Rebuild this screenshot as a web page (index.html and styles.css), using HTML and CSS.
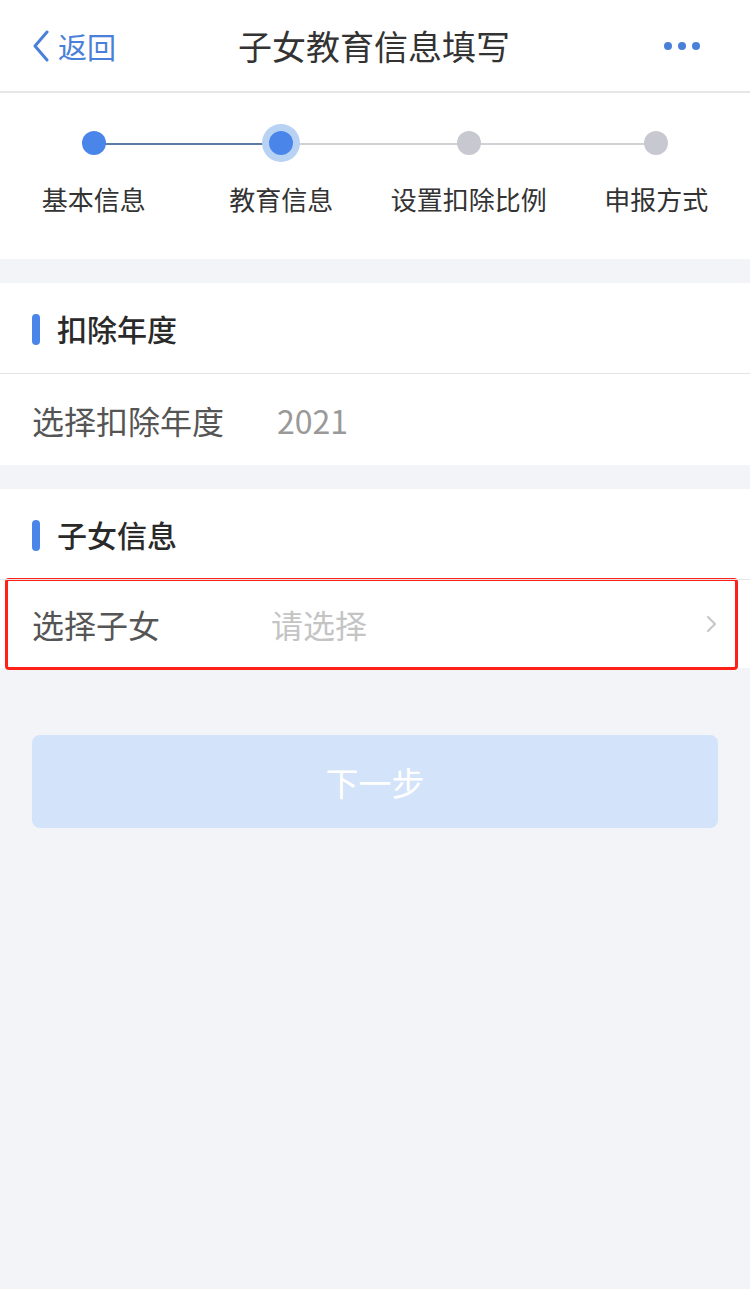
FILE: index.html
```html
<!DOCTYPE html>
<html lang="zh-CN">
<head>
    <meta charset="UTF-8">
    <meta name="viewport" content="width=device-width, initial-scale=1.0">
    <title>子女教育信息填写</title>
    <link rel="stylesheet" href="styles.css">
</head>
<body>
    <div class="navbar">
        <div class="nav-back">
            <svg class="back-icon" width="18" height="32" viewBox="0 0 18 32">
                <path d="M15 2 L3 16 L15 30" fill="none" stroke="#4a80d8" stroke-width="3" stroke-linecap="round" stroke-linejoin="round"/>
            </svg>
            <span>返回</span>
        </div>
        <div class="nav-title">子女教育信息填写</div>
        <div class="nav-more">
            <span></span><span></span><span></span>
        </div>
    </div>

    <div class="steps">
        <div class="step done">
            <div class="dot"></div>
            <div class="step-label">基本信息</div>
        </div>
        <div class="step active">
            <div class="dot"></div>
            <div class="step-label">教育信息</div>
        </div>
        <div class="step">
            <div class="dot"></div>
            <div class="step-label">设置扣除比例</div>
        </div>
        <div class="step">
            <div class="dot"></div>
            <div class="step-label">申报方式</div>
        </div>
    </div>

    <div class="section">
        <div class="section-title">扣除年度</div>
        <div class="row">
            <div class="row-label label-year">选择扣除年度</div>
            <div class="row-value">2021</div>
        </div>
    </div>

    <div class="section">
        <div class="section-title">子女信息</div>
        <div class="row row-marked">
            <div class="row-label label-child">选择子女</div>
            <div class="row-value placeholder">请选择</div>
            <svg class="arrow" width="12" height="18" viewBox="0 0 12 18">
                <path d="M2 2 L9 9 L2 16" fill="none" stroke="#c8c8c8" stroke-width="2.2" stroke-linecap="round" stroke-linejoin="round"/>
            </svg>
        </div>
    </div>

    <div class="actions">
        <button class="btn-next" disabled>下一步</button>
    </div>
</body>
</html>
```

FILE: styles.css
```css
* {
    box-sizing: border-box;
}

body {
    margin: 0;
    min-height: 1289px;
    background-color: #f2f4f8;
    font-family: "Noto Sans CJK SC", "Noto Sans", sans-serif;
    color: #333;
}

/* top bar */
.navbar {
    height: 93px;
    background-color: #fff;
    border-bottom: 2px solid #e6e6e6;
    display: flex;
    align-items: center;
    padding: 0 32px;
}

.nav-back {
    display: flex;
    align-items: center;
    gap: 8px;
    color: #4a80d8;
    font-size: 29px;
    width: 120px;
}

.nav-title {
    flex: 1;
    text-align: center;
    font-size: 34px;
    color: #333;
    margin-right: 68px;
}

.nav-more {
    display: flex;
    gap: 6px;
    margin-right: 18px;
}

.nav-more span {
    width: 8px;
    height: 8px;
    border-radius: 50%;
    background-color: #4a80d8;
}

/* stepper */
.steps {
    display: grid;
    grid-template-columns: repeat(4, 1fr);
    background-color: #fff;
    height: 166px;
    padding-top: 38px;
}

.step {
    display: flex;
    flex-direction: column;
    align-items: center;
    position: relative;
}

.step:not(:last-child)::after {
    content: "";
    position: absolute;
    top: 12px;
    left: 50%;
    width: 100%;
    height: 2px;
    background-color: #d2d2d6;
}

.step.done::after {
    background-color: #5c7ba3;
}

.dot {
    width: 24px;
    height: 24px;
    border-radius: 50%;
    background-color: #c8c8d0;
    position: relative;
    z-index: 1;
}

.step.done .dot,
.step.active .dot {
    background-color: #4a86ea;
}

.step.active .dot {
    box-shadow: 0 0 0 7px #b8d2f4;
}

.step-label {
    margin-top: 26px;
    font-size: 26px;
    color: #333;
    line-height: 36px;
}

/* form sections */
.section {
    background-color: #fff;
    margin-top: 24px;
}

.section-title {
    height: 91px;
    display: flex;
    align-items: center;
    padding-left: 57px;
    font-size: 30px;
    font-weight: 500;
    color: #2a2a2a;
    border-bottom: 1px solid #e4e4e4;
    position: relative;
}

.section-title::before {
    content: "";
    position: absolute;
    left: 32px;
    top: 31px;
    width: 8px;
    height: 31px;
    border-radius: 4px;
    background-color: #4a86ea;
}

.row {
    height: 91px;
    display: flex;
    align-items: center;
    padding: 0 32px;
    font-size: 32px;
}

.row-label {
    color: #555;
}

.label-year {
    width: 245px;
}

.label-child {
    width: 239px;
}

.row-value {
    flex: 1;
    color: #999;
}

.row-value.placeholder {
    color: #c4c4c4;
}

.row-marked {
    height: 88px;
    outline: 3px solid #ff2018;
    outline-offset: -1px;
    margin: 0 14px 0 7px;
    padding: 0 18px 0 25px;
    border-radius: 2px;
}

/* bottom button */
.actions {
    padding: 67px 32px 0;
}

.btn-next {
    width: 100%;
    height: 93px;
    border: none;
    border-radius: 8px;
    background-color: #d3e4fa;
    color: #fff;
    font-family: inherit;
    font-size: 33px;
}
```
